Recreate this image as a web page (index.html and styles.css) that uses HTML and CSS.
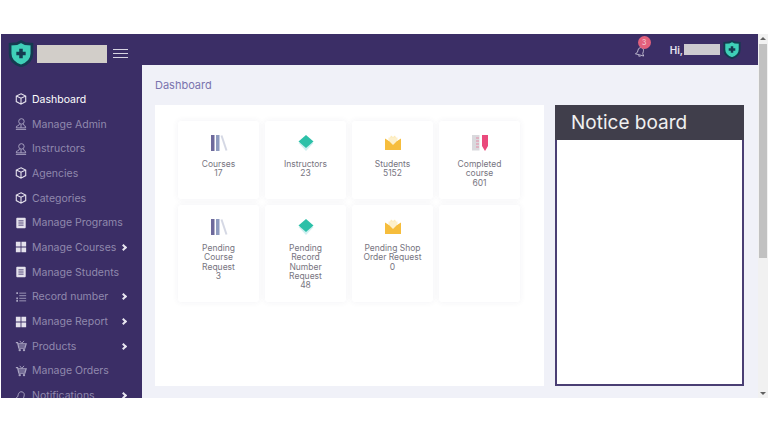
FILE: index.html
```html
<!DOCTYPE html>
<html lang="en">

<head>
    <meta charset="UTF-8">
    <meta name="viewport" content="width=device-width, initial-scale=1.0">
    <title>Dashboard</title>
    <link rel="stylesheet" href="styles.css">
</head>

<body>
    <svg class="defs" width="0" height="0">
        <symbol id="i-shield" viewBox="0 0 24 26">
            <path d="M12 1.500 L16 3.500 L22.500 4 V13 C22.500 19 18 23 12 25 C6 23 1.500 19 1.500 13 V4 L8 3.500 Z" fill="#3fd0b8" stroke="#143b50" stroke-width="2.600" />
            <path d="M12 8.500 V17.500 M7.500 13 H16.500" stroke="#143b50" stroke-width="3.400" />
        </symbol>
        <symbol id="i-box" viewBox="0 0 14 14">
            <path d="M7 1 L12.500 3.500 V10 L7 13 L1.500 10 V3.500 Z M1.500 3.500 L7 6 L12.500 3.500 M7 6 V13" fill="none" stroke="currentColor" stroke-width="1.300" />
        </symbol>
        <symbol id="i-user" viewBox="0 0 14 14">
            <circle cx="7.500" cy="4" r="3.200" fill="none" stroke="currentColor" stroke-width="1.100" />
            <path d="M5 7 C5 9 3 9 2 9.500 L1.500 11.500 H12.500 L12 9.500 C11 9 10 9 10 7 M7 7.500 V11.500 M1 13.300 H13" fill="none" stroke="currentColor" stroke-width="1.100" />
        </symbol>
        <symbol id="i-doc" viewBox="0 0 14 14">
            <rect x="1.500" y="1" width="11" height="12" rx="1" fill="currentColor" />
            <path d="M4 4.500 H10 M4 7 H10 M4 9.500 H10" stroke="#3b2e66" stroke-width="1" />
        </symbol>
        <symbol id="i-grid" viewBox="0 0 14 14">
            <path d="M1 1 H6.500 V6.500 H1 Z M7.500 1 H13 V6.500 H7.500 Z M1 7.500 H6.500 V13 H1 Z M7.500 7.500 H13 V13 H7.500 Z" fill="currentColor" />
        </symbol>
        <symbol id="i-list" viewBox="0 0 14 14">
            <path d="M5 2.500 H13 M5 5.500 H13 M5 8.500 H13 M5 11.500 H13" stroke="currentColor" stroke-width="1" />
            <path d="M1.500 1.500 H3.500 V3.500 H1.500 Z M1.500 7.500 H3.500 V9.500 H1.500 Z M1.500 10.500 H3.500 V12.500 H1.500 Z" fill="currentColor" />
        </symbol>
        <symbol id="i-cart" viewBox="0 0 14 14">
            <path d="M1 3 H3 L4.500 9.500 H11.500 L13 4.500 H3.500 M4 7 H12" fill="none" stroke="currentColor" stroke-width="1.400" />
            <path d="M5.500 1 L8 4 L10.500 1" fill="none" stroke="currentColor" stroke-width="1.100" />
            <circle cx="5.500" cy="11.800" r="1.400" fill="currentColor" />
            <circle cx="10.500" cy="11.800" r="1.400" fill="currentColor" />
        </symbol>
        <symbol id="i-bell" viewBox="0 0 14 14">
            <path d="M7 2 C9.500 2 10.500 4 10.500 6 V9 L12.500 11.500 H1.500 L3.500 9 V6 C3.500 4 4.500 2 7 2 Z M5.500 13 H8.500" fill="none" stroke="currentColor" stroke-width="1" transform="rotate(15 7 7)" />
        </symbol>
        <symbol id="i-books" viewBox="0 0 18 18">
            <rect x="1" y="1" width="3.500" height="16" fill="#6e6a9c" />
            <rect x="6" y="1" width="3.500" height="16" fill="#8f9cc0" />
            <path d="M11.500 1.500 L16.500 16.500" stroke="#d5d8e4" stroke-width="2" />
        </symbol>
        <symbol id="i-layers" viewBox="0 0 18 18">
            <path d="M1.500 9 L9 17 L16.500 9 Z" fill="#cfeff0" />
            <path d="M9 1 L16.500 7.500 L9 14 L1.500 7.500 Z" fill="#2cc0a8" />
        </symbol>
        <symbol id="i-mail" viewBox="0 0 18 18">
            <path d="M5 6 L7 1.500 L9 3 L11 1.500 L13 6 Z" fill="#fdebb8" />
            <path d="M1 4.500 L5 7 H13 L17 4.500 V16 H1 Z" fill="#f6bd3c" />
            <path d="M4.500 3.500 H13.500 V6.500 L9 11 L4.500 6.500 Z" fill="#fdf0cb" />
        </symbol>
        <symbol id="i-ruler" viewBox="0 0 18 18">
            <rect x="1" y="1" width="7.500" height="15.500" fill="#d9d9dd" />
            <path d="M5 4 H8 M5 7 H8 M5 10 H8 M5 13 H8" stroke="#e58aa5" stroke-width="1" />
            <path d="M11 1 H17 V12 L14 17 L11 12 Z" fill="#ea4a7c" />
        </symbol>
    </svg>

    <div class="app">
        <aside class="sidebar">
            <div class="brand">
                <svg class="brand-logo"><use href="#i-shield" /></svg>
                <div class="brand-name"></div>
                <div class="burger"><span></span><span></span><span></span></div>
            </div>
            <ul class="menu">
                <li class="active"><svg><use href="#i-box" /></svg>Dashboard</li>
                <li><svg class="dim"><use href="#i-user" /></svg>Manage Admin</li>
                <li><svg class="dim"><use href="#i-user" /></svg>Instructors</li>
                <li><svg><use href="#i-box" /></svg>Agencies</li>
                <li><svg><use href="#i-box" /></svg>Categories</li>
                <li><svg><use href="#i-doc" /></svg>Manage Programs</li>
                <li><svg><use href="#i-grid" /></svg>Manage Courses<b class="chev"></b></li>
                <li><svg><use href="#i-doc" /></svg>Manage Students</li>
                <li><svg class="dim"><use href="#i-list" /></svg>Record number<b class="chev"></b></li>
                <li><svg><use href="#i-grid" /></svg>Manage Report<b class="chev"></b></li>
                <li><svg class="dim"><use href="#i-cart" /></svg>Products<b class="chev"></b></li>
                <li><svg class="dim"><use href="#i-cart" /></svg>Manage Orders</li>
                <li><svg class="dim"><use href="#i-bell" /></svg>Notifications<b class="chev"></b></li>
            </ul>
        </aside>

        <div class="main">
            <header class="topbar">
                <div class="bell">
                    <svg><use href="#i-bell" /></svg>
                    <span class="badge">3</span>
                </div>
                <span class="hi">Hi,</span>
                <div class="user-name"></div>
                <svg class="user-logo"><use href="#i-shield" /></svg>
            </header>

            <div class="content">
                <div class="crumb">Dashboard</div>
                <div class="columns">
                    <section class="panel">
                        <div class="cards">
                            <div class="card"><svg><use href="#i-books" /></svg><p>Courses</p><p>17</p></div>
                            <div class="card"><svg><use href="#i-layers" /></svg><p>Instructors</p><p>23</p></div>
                            <div class="card"><svg><use href="#i-mail" /></svg><p>Students</p><p>5152</p></div>
                            <div class="card"><svg><use href="#i-ruler" /></svg><p>Completed course</p><p>601</p></div>
                            <div class="card"><svg><use href="#i-books" /></svg><p>Pending Course Request</p><p>3</p></div>
                            <div class="card"><svg><use href="#i-layers" /></svg><p>Pending Record Number Request</p><p>48</p></div>
                            <div class="card"><svg><use href="#i-mail" /></svg><p>Pending Shop Order Request</p><p>0</p></div>
                            <div class="card"></div>
                        </div>
                    </section>
                    <section class="notice">
                        <h2>Notice board</h2>
                    </section>
                </div>
            </div>
        </div>

        <div class="scrollbar">
            <i class="arrow-up"></i>
            <div class="thumb"></div>
            <i class="arrow-down"></i>
        </div>
    </div>
</body>

</html>
```

FILE: styles.css
```css
body {
    margin: 0;
    background: #ffffff;
    font-family: Inter, "Liberation Sans", sans-serif;
}

.defs {
    position: absolute;
}

.app {
    display: flex;
    height: 364px;
    margin: 34px 0 0 1px;
    overflow: hidden;
}

.sidebar {
    width: 141px;
    flex-shrink: 0;
    background: #3b2e66;
}

.brand {
    display: flex;
    align-items: center;
    height: 27px;
    padding: 6px 0 20px 7px;
}

.brand-logo {
    width: 26px;
    height: 27px;
}

.brand-name {
    width: 70px;
    height: 18px;
    margin-left: 3px;
    background: #d2cec9;
}

.burger {
    display: flex;
    flex-direction: column;
    gap: 3px;
    margin-left: 6px;
}

.burger span {
    display: block;
    width: 15px;
    height: 1px;
    background: #d8d5e2;
}

.menu {
    list-style: none;
    margin: 0;
    padding: 0;
}

.menu li {
    display: flex;
    align-items: center;
    height: 24.7px;
    padding-left: 14px;
    font-size: 10.500px;
    color: #9089ad;
    white-space: nowrap;
}

.menu li svg {
    width: 12px;
    height: 12px;
    margin-right: 5px;
    color: #e4e1ec;
    flex-shrink: 0;
}

.menu li svg.dim {
    color: #aaa5c2;
}

.menu li.active {
    color: #ffffff;
}

.chev {
    flex-shrink: 0;
    width: 3px;
    height: 3px;
    margin-left: auto;
    margin-right: 16px;
    border-top: 2px solid #e8e6f0;
    border-right: 2px solid #e8e6f0;
    transform: rotate(45deg);
}

.main {
    flex: 1;
    display: flex;
    flex-direction: column;
    min-width: 0;
    background: #f0f1f8;
}

.topbar {
    display: flex;
    align-items: center;
    justify-content: flex-end;
    height: 31px;
    flex-shrink: 0;
    background: #3b2e66;
    padding-right: 17px;
}

.bell {
    position: relative;
    width: 11px;
    height: 11px;
    margin: 4px 24px 0 0;
    color: #cfcbdc;
}

.bell svg {
    width: 11px;
    height: 11px;
    display: block;
}

.badge {
    position: absolute;
    top: -10px;
    left: 3px;
    width: 13px;
    height: 13px;
    border-radius: 50%;
    background: #e2607c;
    color: #f7d5dc;
    font-size: 7px;
    line-height: 13px;
    text-align: center;
}

.hi {
    font-size: 10px;
    font-weight: 600;
    color: #e6e3ef;
}

.user-name {
    width: 36px;
    height: 11px;
    margin-left: 1px;
    background: #cdcbd0;
}

.user-logo {
    width: 18px;
    height: 19px;
    margin-left: 3px;
}

.content {
    flex: 1;
    padding: 14px 14px 0 13px;
}

.crumb {
    font-size: 11px;
    line-height: 13px;
    color: #7a74ae;
    margin-bottom: 13px;
}

.columns {
    display: flex;
    gap: 11px;
    align-items: flex-start;
}

.panel {
    width: 389px;
    height: 281px;
    padding: 16px 0 0 23px;
    background: #ffffff;
    box-sizing: border-box;
}

.cards {
    display: grid;
    grid-template-columns: repeat(4, 81px);
    grid-template-rows: 78px 97px;
    gap: 6px;
}

.card {
    display: flex;
    flex-direction: column;
    align-items: center;
    padding: 13px 10px 0;
    box-sizing: border-box;
    border-radius: 3px;
    background: #ffffff;
    box-shadow: rgba(60, 50, 100, 0.07) 0px 0px 6px;
    text-align: center;
}

.card svg {
    width: 18px;
    height: 18px;
    margin-bottom: 8px;
}

.card p {
    margin: 0;
    font-size: 8.500px;
    line-height: 9.300px;
    color: #77757f;
}

.notice {
    width: 189px;
    height: 281px;
    box-sizing: border-box;
    background: #ffffff;
    border: 2px solid #4a3f74;
    border-top: 0;
}

.notice h2 {
    margin: 0 -2px;
    height: 35px;
    padding-left: 16px;
    background: #403e4b;
    color: #f0f0f0;
    font-size: 19px;
    font-weight: 400;
    line-height: 35px;
}

.scrollbar {
    display: flex;
    flex-direction: column;
    align-items: center;
    width: 10px;
    flex-shrink: 0;
    padding-top: 3px;
    box-sizing: border-box;
    background: #f1f1f1;
}

.thumb {
    width: 8px;
    height: 214px;
    margin-top: 4px;
    background: #c1c1c1;
}

.arrow-up {
    border: 3px solid transparent;
    border-top: 0;
    border-bottom: 3px solid #606060;
}

.arrow-down {
    margin-top: auto;
    margin-bottom: 3px;
    border: 3px solid transparent;
    border-bottom: 0;
    border-top: 3px solid #606060;
}
```
